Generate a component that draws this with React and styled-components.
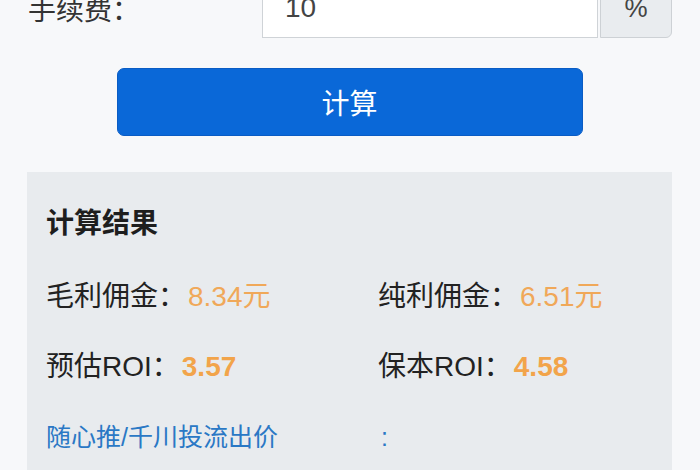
import React from 'react'
import styled, { createGlobalStyle } from 'styled-components'

const GlobalStyle = createGlobalStyle`
  html, body {
    margin: 0;
    padding: 0;
    background: #f7f8fa;
    font-family: "Liberation Sans", "Noto Sans CJK SC", sans-serif;
    color: #222;
    overflow: hidden;
  }
`

const Page = styled.div`
  width: 700px;
  height: 470px;
  padding: 0 28px 0 27px;
  box-sizing: border-box;
  overflow: hidden;
`

const FormRow = styled.div`
  display: flex;
  align-items: center;
  margin-top: -22px;
  height: 60px;
`

const FieldLabel = styled.label`
  flex: 0 0 234px;
  font-size: 28px;
  color: #333;
  padding-left: 1px;
`

const InputGroup = styled.div`
  flex: 1;
  min-width: 0;
  display: flex;
  gap: 2px;
  height: 100%;
`

const TextInput = styled.input`
  flex: 1;
  min-width: 0;
  width: 0;
  box-sizing: border-box;
  border: 1px solid #cfd3d7;
  background: #fff;
  padding: 0 0 0 22px;
  font-family: inherit;
  font-size: 28px;
  color: #444;
  outline: none;
`

const Addon = styled.span`
  flex: 0 0 72px;
  display: flex;
  align-items: center;
  justify-content: center;
  box-sizing: border-box;
  border: 1px solid #cdd1d5;
  border-radius: 0 6px 6px 0;
  background: #e9ecef;
  font-size: 26px;
  color: #444;
`

const SubmitButton = styled.button`
  display: block;
  width: 466px;
  height: 68px;
  margin: 30px auto 0;
  border: 1px solid #0a5cc4;
  border-radius: 7px;
  background: #0a68d8;
  color: #fff;
  font-family: inherit;
  font-size: 28px;
  cursor: pointer;
`

const ResultPanel = styled.section`
  margin-top: 36px;
  background: #e8ebee;
  padding: 36px 19px 40px;
`

const PanelTitle = styled.h3`
  margin: 0 0 41px;
  font-size: 28px;
  line-height: 32px;
  font-weight: 700;
  color: #1e1e1e;
`

const ResultGrid = styled.div`
  display: grid;
  grid-template-columns: 332px 1fr;
  row-gap: 38px;
`

const ResultItem = styled.div`
  font-size: 28px;
  line-height: 32px;
  color: #222;
  white-space: nowrap;
`

const ResultValue = styled.span`
  color: ${p => (p.$bold ? '#f2a44a' : '#f0a859')};
  font-weight: ${p => (p.$bold ? 700 : 400)};
  margin-left: 2px;
`

const LinkText = styled.a`
  font-size: 25px;
  line-height: 32px;
  color: #2a78c5;
  text-decoration: none;
  white-space: nowrap;
  padding-left: ${p => p.$indent || 0}px;
`

const results = [
  { label: '毛利佣金：', value: '8.34元' },
  { label: '纯利佣金：', value: '6.51元' },
  { label: '预估ROI：', value: '3.57', bold: true },
  { label: '保本ROI：', value: '4.58', bold: true },
]

export default function App() {
  return (
    <>
      <GlobalStyle />
      <Page>
        <FormRow>
          <FieldLabel>手续费：</FieldLabel>
          <InputGroup>
            <TextInput defaultValue="10" />
            <Addon>%</Addon>
          </InputGroup>
        </FormRow>

        <SubmitButton>计算</SubmitButton>

        <ResultPanel>
          <PanelTitle>计算结果</PanelTitle>
          <ResultGrid>
            {results.map(r => (
              <ResultItem key={r.label}>
                {r.label}
                <ResultValue $bold={r.bold}>{r.value}</ResultValue>
              </ResultItem>
            ))}
            <LinkText href="#">随心推/千川投流出价</LinkText>
            <LinkText href="#" $indent={3}>:</LinkText>
          </ResultGrid>
        </ResultPanel>
      </Page>
    </>
  )
}
